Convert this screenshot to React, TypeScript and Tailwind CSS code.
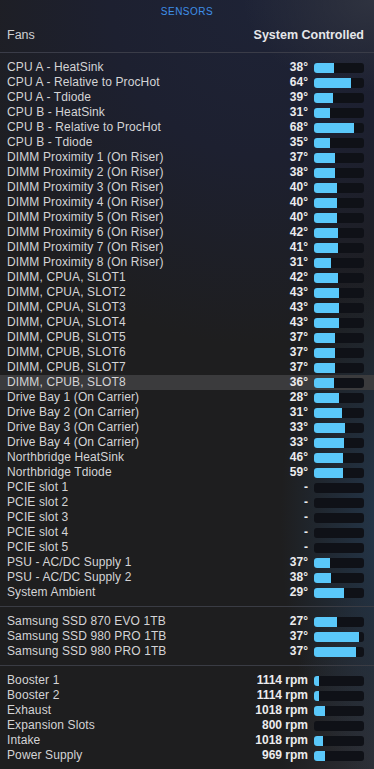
type Row = { name: string; value: string; fill: number };

const temps: Row[] = [
  { name: "CPU A - HeatSink", value: "38°", fill: 20 },
  { name: "CPU A - Relative to ProcHot", value: "64°", fill: 37 },
  { name: "CPU A - Tdiode", value: "39°", fill: 19 },
  { name: "CPU B - HeatSink", value: "31°", fill: 16 },
  { name: "CPU B - Relative to ProcHot", value: "68°", fill: 40 },
  { name: "CPU B - Tdiode", value: "35°", fill: 16 },
  { name: "DIMM Proximity 1 (On Riser)", value: "37°", fill: 21 },
  { name: "DIMM Proximity 2 (On Riser)", value: "38°", fill: 21 },
  { name: "DIMM Proximity 3 (On Riser)", value: "40°", fill: 23 },
  { name: "DIMM Proximity 4 (On Riser)", value: "40°", fill: 23 },
  { name: "DIMM Proximity 5 (On Riser)", value: "40°", fill: 23 },
  { name: "DIMM Proximity 6 (On Riser)", value: "42°", fill: 24 },
  { name: "DIMM Proximity 7 (On Riser)", value: "41°", fill: 24 },
  { name: "DIMM Proximity 8 (On Riser)", value: "31°", fill: 17 },
  { name: "DIMM, CPUA, SLOT1", value: "42°", fill: 24 },
  { name: "DIMM, CPUA, SLOT2", value: "43°", fill: 25 },
  { name: "DIMM, CPUA, SLOT3", value: "43°", fill: 25 },
  { name: "DIMM, CPUA, SLOT4", value: "43°", fill: 25 },
  { name: "DIMM, CPUB, SLOT5", value: "37°", fill: 21 },
  { name: "DIMM, CPUB, SLOT6", value: "37°", fill: 21 },
  { name: "DIMM, CPUB, SLOT7", value: "37°", fill: 21 },
  { name: "DIMM, CPUB, SLOT8", value: "36°", fill: 20 },
  { name: "Drive Bay 1 (On Carrier)", value: "28°", fill: 25 },
  { name: "Drive Bay 2 (On Carrier)", value: "31°", fill: 28 },
  { name: "Drive Bay 3 (On Carrier)", value: "33°", fill: 31 },
  { name: "Drive Bay 4 (On Carrier)", value: "33°", fill: 30 },
  { name: "Northbridge HeatSink", value: "46°", fill: 29 },
  { name: "Northbridge Tdiode", value: "59°", fill: 29 },
  { name: "PCIE slot 1", value: "-", fill: 0 },
  { name: "PCIE slot 2", value: "-", fill: 0 },
  { name: "PCIE slot 3", value: "-", fill: 0 },
  { name: "PCIE slot 4", value: "-", fill: 0 },
  { name: "PCIE slot 5", value: "-", fill: 0 },
  { name: "PSU - AC/DC Supply 1", value: "37°", fill: 16 },
  { name: "PSU - AC/DC Supply 2", value: "38°", fill: 17 },
  { name: "System Ambient", value: "29°", fill: 30 },
];

const drives: Row[] = [
  { name: "Samsung SSD 870 EVO 1TB", value: "27°", fill: 23 },
  { name: "Samsung SSD 980 PRO 1TB", value: "37°", fill: 45 },
  { name: "Samsung SSD 980 PRO 1TB", value: "37°", fill: 42 },
];

const fans: Row[] = [
  { name: "Booster 1", value: "1114 rpm", fill: 5 },
  { name: "Booster 2", value: "1114 rpm", fill: 5 },
  { name: "Exhaust", value: "1018 rpm", fill: 11 },
  { name: "Expansion Slots", value: "800 rpm", fill: 0 },
  { name: "Intake", value: "1018 rpm", fill: 9 },
  { name: "Power Supply", value: "969 rpm", fill: 11 },
];

function SensorRow({ row, active }: { row: Row; active?: boolean }) {
  return (
    <div
      className={
        "flex h-[15px] items-center pl-[7px] pr-[10px] " +
        (active ? "bg-[#3b3b3d]" : "")
      }
    >
      <span className="flex-1 truncate tracking-[0.01em] text-[#d4d4d6]">{row.name}</span>
      <span className="font-bold text-[#ececee]">{row.value}</span>
      <div className="ml-[6px] h-[10px] w-[50px] overflow-hidden rounded-[3px] bg-[#0f1117]">
        {row.fill > 0 && (
          <div className="h-full bg-[#5ac8fa]" style={{ width: row.fill }} />
        )}
      </div>
    </div>
  );
}

function Divider() {
  return <div className="mt-[6px] mb-[7px] h-px bg-[#3a3c44]" />;
}

export default function App() {
  return (
    <div
      className="h-[769px] w-[374px] overflow-hidden bg-[#1e1e1f] bg-[radial-gradient(35%_12%_at_100%_0%,#2f3340_0%,transparent_100%),radial-gradient(90%_45%_at_70%_0%,#1e2336_0%,#1d2030_45%,transparent_100%),radial-gradient(30%_35%_at_105%_68%,#24384e_0%,transparent_100%),radial-gradient(30%_25%_at_105%_100%,#30323a_0%,transparent_100%)] text-[12px] leading-[15px]"
      style={{ fontFamily: '"Liberation Sans", Arial, sans-serif' }}
    >
      <div className="flex h-[22px] items-center justify-center text-[10px] font-medium tracking-[0.05em] text-[#3f8fe8]">
        SENSORS
      </div>
      <div className="flex h-[27px] items-center justify-between pl-[7px] pr-[10px] text-[12.5px]">
        <span className="text-[#cfd0d4]">Fans</span>
        <span className="font-bold text-[#e6e7ea]">System Controlled</span>
      </div>
      <div className="mt-[3px] mb-[7px] h-px bg-[#3a3c48]" />
      <div>
        {temps.map((r, i) => (
          <SensorRow key={i} row={r} active={i === 21} />
        ))}
      </div>
      <Divider />
      <div>
        {drives.map((r, i) => (
          <SensorRow key={i} row={r} />
        ))}
      </div>
      <Divider />
      <div>
        {fans.map((r, i) => (
          <SensorRow key={i} row={r} />
        ))}
      </div>
    </div>
  );
}
